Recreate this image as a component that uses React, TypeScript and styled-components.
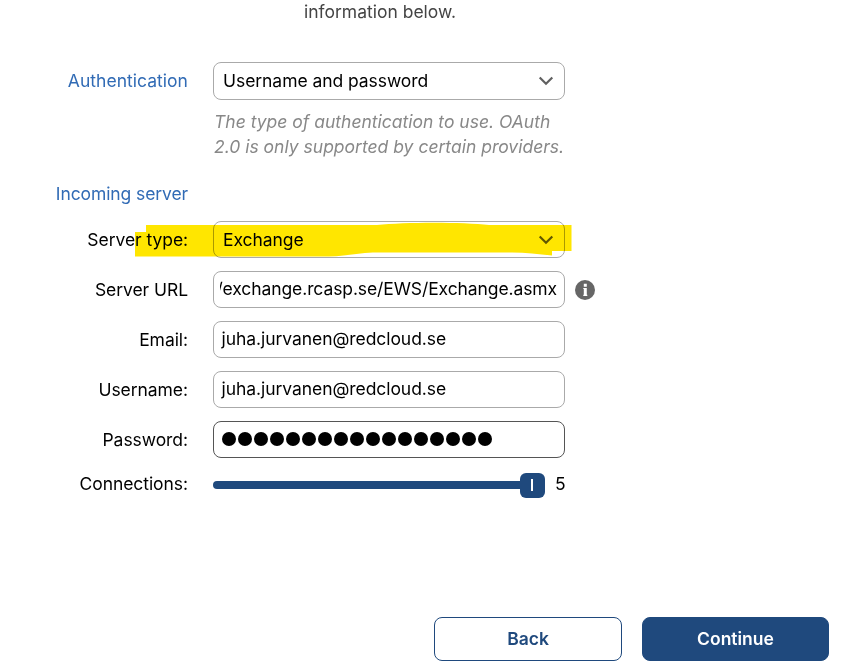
import React from "react";
import styled, { createGlobalStyle } from "styled-components";

const GlobalStyle = createGlobalStyle`
  * { box-sizing: border-box; }
  body { margin: 0; background: #fff; }
`;

const Page = styled.main`
  position: relative;
  width: 848px;
  height: 672px;
  overflow: hidden;
  background: #fff;
  color: #000;
  font-family: Inter, "Liberation Sans", sans-serif;
  font-size: 17.5px;
  line-height: 25px;
`;

const Intro = styled.p`
  margin: -1px 0 0;
  width: 760px;
  height: 63px;
  text-align: center;
  color: #444;
`;

const Form = styled.form`
  display: flex;
  flex-direction: column;
  height: 555px;
`;

const Row = styled.div<{ $height?: number; $gap?: number }>`
  display: grid;
  grid-template-columns: 188px 352px 20px;
  grid-template-rows: 100%;
  column-gap: 25px;
  align-items: center;
  height: ${(p) => p.$height ?? 37}px;
  margin-bottom: ${(p) => p.$gap ?? 13}px;
`;

const InfoRow = styled(Row)`
  & > :last-child { margin-left: -15px; }
`;

const Label = styled.label<{ $section?: boolean; $tracking?: number; $lift?: number }>`
  text-align: right;
  white-space: nowrap;
  letter-spacing: ${(p) => p.$tracking ?? -0.06}px;
  padding-bottom: ${(p) => p.$lift ?? 0}px;
  color: ${(p) => (p.$section ? "#316bb5" : "#000")};
`;

const Field = styled.div<{ $focused?: boolean; $select?: boolean; $lift?: number }>`
  display: flex;
  align-items: center;
  justify-content: space-between;
  height: 100%;
  padding: ${(p) => (p.$select ? `0 10px ${p.$lift ?? 0}px 9px` : "0 7px 2px 7.5px")};
  border: 1px solid ${(p) => (p.$focused ? "#555" : "#aaa")};
  border-radius: 8px;
  white-space: nowrap;
  letter-spacing: -0.06px;
`;

const ScrolledValue = styled.span`
  display: flex;
  justify-content: flex-end;
  width: 339px;
  margin-left: -2px;
  letter-spacing: -0.1px;
  overflow: hidden;
`;

const Masked = styled.span`
  display: flex;
  gap: 2px;
`;

const Dot = styled.span`
  width: 14px;
  height: 14px;
  border-radius: 50%;
  background: #000;
`;

const Hint = styled.p`
  width: 362px;
  height: 50px;
  margin: 9px 0 22px 214px;
  color: #888;
  font-style: italic;
`;

const Slider = styled.div`
  display: flex;
  align-items: center;
  padding-top: 3px;
  & > * { flex-shrink: 0; }
`;

const Track = styled.div`
  width: 308px;
  height: 8px;
  border-radius: 4px 0 0 4px;
  background: #1f497d;
`;

const Thumb = styled.div`
  display: flex;
  align-items: center;
  justify-content: center;
  width: 25px;
  height: 25px;
  margin-left: -1px;
  border-radius: 6px;
  background: #1f497d;
  &::after {
    content: "";
    width: 2px;
    height: 12px;
    margin: 0 1px 1px 0;
    background: #fff;
  }
`;

const SliderValue = styled.output`
  margin: -3px 0 0 10px;
`;

const Actions = styled.footer`
  display: flex;
  justify-content: flex-end;
  gap: 20px;
  padding-right: 19px;
`;

const Button = styled.button<{ $primary?: boolean }>`
  width: ${(p) => (p.$primary ? 187 : 188)}px;
  height: 44px;
  padding: 0 0 2px;
  border: 1px solid #1f497d;
  border-radius: 8px;
  background: ${(p) => (p.$primary ? "#1f497d" : "#fff")};
  color: ${(p) => (p.$primary ? "#fff" : "#1f497d")};
  font: 600 17.5px Inter, "Liberation Sans", sans-serif;
`;

const Marker = styled.svg`
  position: absolute;
  left: 0;
  top: 210px;
  mix-blend-mode: multiply;
  pointer-events: none;
`;

const Chevron = () => (
  <svg width="16" height="10" viewBox="0 0 16 10" fill="none">
    <path d="M1.7 1.5 8 7.7l6.3-6.2" stroke="#606060" strokeWidth="2.2" />
  </svg>
);

const InfoIcon = () => (
  <svg width="20" height="20" viewBox="0 0 20 20">
    <circle cx="10" cy="10" r="10" fill="#666" />
    <path d="M8.8 3.7h3v3h-3zM8.3 8h3.500v6.800h.5v1.300H8.300v-1.300h.5V9.100h-.5z" fill="#fff" />
  </svg>
);

export default function App() {
  return (
    <>
      <GlobalStyle />
      <Page>
        <Intro>information below.</Intro>
        <Form>
          <Row $height={38} $gap={0}>
            <Label $section $tracking={0.03} $lift={2}>Authentication</Label>
            <Field $select $lift={1}>Username and password<Chevron /></Field>
          </Row>
          <Hint>The type of authentication to use. OAuth<br />2.0 is only supported by certain providers.</Hint>
          <Row $height={25} $gap={15}>
            <Label $section $tracking={-0.1}>Incoming server</Label>
          </Row>
          <Row>
            <Label>Server type:</Label>
            <Field $select>Exchange<Chevron /></Field>
          </Row>
          <InfoRow>
            <Label>Server URL</Label>
            <Field><ScrolledValue>/exchange.rcasp.se/EWS/Exchange.asmx</ScrolledValue></Field>
            <InfoIcon />
          </InfoRow>
          <Row>
            <Label>Email:</Label>
            <Field>juha.jurvanen@redcloud.se</Field>
          </Row>
          <Row>
            <Label>Username:</Label>
            <Field>juha.jurvanen@redcloud.se</Field>
          </Row>
          <Row>
            <Label>Password:</Label>
            <Field $focused>
              <Masked>{Array.from({ length: 17 }, (_, i) => <Dot key={i} />)}</Masked>
            </Field>
          </Row>
          <Row $height={25}>
            <Label>Connections:</Label>
            <Slider>
              <Track />
              <Thumb />
              <SliderValue>5</SliderValue>
            </Slider>
          </Row>
        </Form>
        <Actions>
          <Button type="button">Back</Button>
          <Button type="button" $primary>Continue</Button>
        </Actions>
        <Marker width="600" height="60" viewBox="0 0 600 60">
          <path
            d="M146 15H377C405 12 463 12 489 15H571.5V41H552V45.5C538 44 526 42.5 512 42.5H373C360 43 346 46 329 46.5H135V22H146Z"
            fill="#ffe600"
          />
        </Marker>
      </Page>
    </>
  );
}
